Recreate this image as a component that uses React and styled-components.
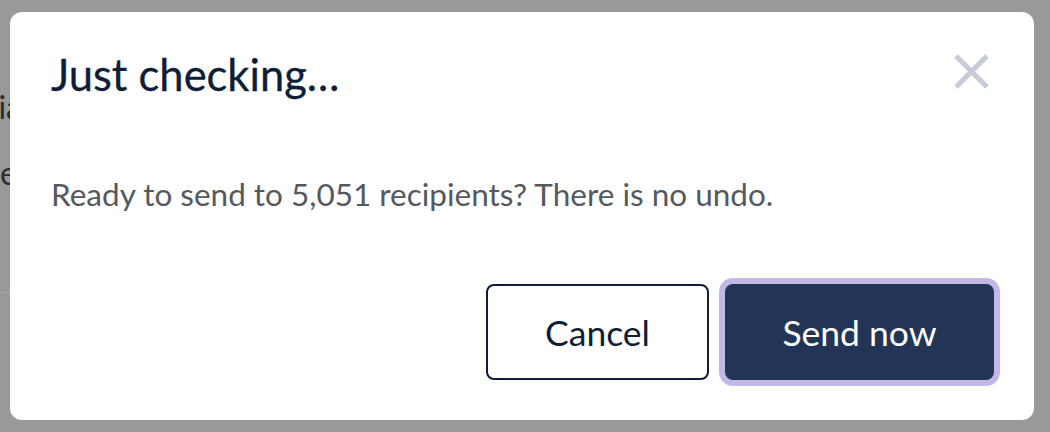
import React from 'react';
import styled, { createGlobalStyle } from 'styled-components';

const GlobalStyle = createGlobalStyle`
  html, body {
    margin: 0;
    padding: 0;
    background: #999999;
    font-family: Lato, "Noto Sans", sans-serif;
  }
`;

const Page = styled.div`
  width: 1050px;
  height: 432px;
  overflow: hidden;
  background: #999999;
`;

const PageColumn = styled.div`
  width: 22px;
  padding-top: 74px;
  display: flex;
  flex-direction: column;
  align-items: flex-end;
  overflow: hidden;
  height: 218px;
  border-bottom: 1px solid #a6a6a6;
  box-sizing: content-box;
`;

const PageLine = styled.p`
  margin: 0 ${({ $inset }) => $inset || 0}px 0 0;
  white-space: nowrap;
  font-size: 32px;
  line-height: 66px;
  color: #2b2b2b;
`;

const Overlay = styled.div`
  position: fixed;
  inset: 0;
  padding: 12px 0 0 10px;
`;

const Modal = styled.div`
  width: 1024px;
  height: 408px;
  box-sizing: border-box;
  background: #ffffff;
  border-radius: 12px;
  padding: 38px 40px 40px 41px;
  display: flex;
  flex-direction: column;
`;

const Header = styled.div`
  display: flex;
  align-items: flex-start;
  justify-content: space-between;
`;

const Title = styled.h2`
  margin: 0;
  font-size: 43.5px;
  line-height: 48px;
  font-weight: 400;
  color: #0e1e36;
  -webkit-text-stroke: 0.3px #0e1e36;
`;

const CloseButton = styled.button`
  border: 0;
  background: none;
  padding: 0;
  margin: 3px 4px 0 0;
  width: 37px;
  height: 37px;
  cursor: pointer;
  svg {
    display: block;
  }
`;

const Message = styled.p`
  margin: 78px 0 0;
  font-size: 31.5px;
  line-height: 36px;
  color: #55595e;
`;

const Actions = styled.div`
  margin-top: auto;
  display: flex;
  justify-content: flex-end;
  gap: 16px;
`;

const Button = styled.button`
  height: 96px;
  box-sizing: border-box;
  padding: 0 40px;
  border-radius: 8px;
  border: 2px solid #0e1e36;
  font-family: Lato, "Noto Sans", sans-serif;
  font-size: 35.5px;
  cursor: pointer;
  background: ${({ $primary }) => ($primary ? '#223556' : '#ffffff')};
  color: ${({ $primary }) => ($primary ? '#ffffff' : '#0e1e36')};
  border-color: ${({ $primary }) => ($primary ? '#223556' : '#0e1e36')};
  box-shadow: ${({ $focused }) => ($focused ? '0 0 0 6px #c2b8e8' : 'none')};
  width: ${({ $primary }) => ($primary ? '269px' : '223px')};
`;

const App = () => {
  return (
    <Page>
      <GlobalStyle />
      <PageColumn>
        <PageLine>Media</PageLine>
        <PageLine $inset={5}>Name</PageLine>
      </PageColumn>
      <Overlay>
        <Modal role="dialog" aria-modal="true">
          <Header>
            <Title>Just checking…</Title>
            <CloseButton aria-label="Close">
              <svg width="37" height="37" viewBox="0 0 37 37">
                <path d="M3 3L34 34M34 3L3 34" stroke="#c5ccd7" strokeWidth="5" />
              </svg>
            </CloseButton>
          </Header>
          <Message>Ready to send to 5,051 recipients? There is no undo.</Message>
          <Actions>
            <Button>Cancel</Button>
            <Button $primary $focused>Send now</Button>
          </Actions>
        </Modal>
      </Overlay>
    </Page>
  );
};

export default App;
